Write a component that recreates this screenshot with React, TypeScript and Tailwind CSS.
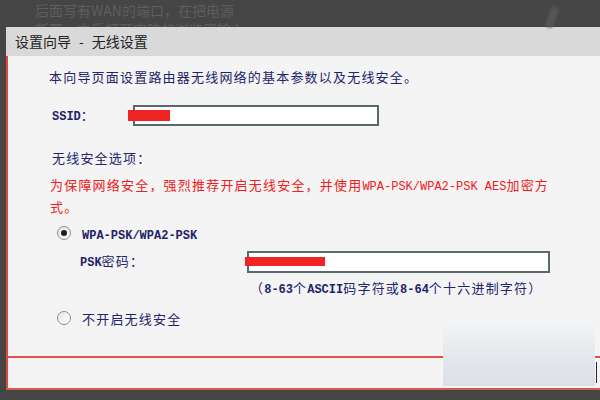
const cjk = "font-['Noto_Sans_CJK_SC','Noto_Sans',sans-serif]";
const mono = "font-['Liberation_Mono','Noto_Sans_CJK_SC',monospace]";

function Zh({ children }: { children: React.ReactNode }) {
  return <span className={`${cjk} tracking-[1.2px]`}>{children}</span>;
}

function En({ children }: { children: React.ReactNode }) {
  return <span className={`${mono} text-[12px] font-bold tracking-normal`}>{children}</span>;
}

function Radio({ checked }: { checked?: boolean }) {
  return (
    <span className="flex h-[14px] w-[14px] items-center justify-center rounded-full border border-[#8d8d8d] bg-gradient-to-br from-[#e6e6e6] to-white">
      {checked && <span className="h-[6px] w-[6px] rounded-full bg-[#1f1f1f]" />}
    </span>
  );
}

export default function App() {
  return (
    <div className="relative h-[400px] w-[600px] overflow-hidden bg-[#454545]">
      {/* 背景里的文章文字 */}
      <div className={`h-[27px] overflow-hidden pl-[35px] pt-[1px] text-[14px] leading-[19px] text-[#5e5e5e] ${cjk}`}>
        <p>后面写有WAN的端口，在把电源</p>
        <p>断开，之后打开电脑的浏览器输入</p>
      </div>
      <div className="absolute left-[548px] top-[6px] h-[22px] w-[8px] rotate-[20deg] rounded-full bg-[#555555] blur-[1px]" />

      {/* 对话框 */}
      <div className="ml-[6px] w-[600px]">
        <div className={`flex h-[29px] items-center bg-[#d9d9d9] pl-[9px] text-[14px] text-[#222] ${cjk}`}>
          <span>设置向导</span>
          <span className="mx-[8px]">-</span>
          <span>无线设置</span>
        </div>

        <div className="flex h-[300px] flex-col border-l-2 border-[#e0473c] bg-[#f4f4f4] pl-[41px] text-[13px] text-[#23236b]">
          <p className="mt-[11px] h-[20px] leading-[20px]">
            <Zh>本向导页面设置路由器无线网络的基本参数以及无线安全。</Zh>
          </p>

          <div className="mt-[18px] flex h-[21px] items-center">
            <span className="w-[84px] pl-[3px] leading-[20px]">
              <En>SSID</En>
              <Zh>：</Zh>
            </span>
            <div className="relative h-[21px] w-[246px] border-2 border-[#566a6a] bg-white">
              <span className="absolute -left-[7px] top-[3px] h-[11px] w-[42px] bg-[#f02424]" />
            </div>
          </div>

          <p className="mt-[22px] h-[20px] pl-[3px] leading-[20px]">
            <Zh>无线安全选项：</Zh>
          </p>

          <div className="mt-[6px] pl-[1px] text-[#ee2020]">
            <p className="h-[22px] whitespace-nowrap leading-[22px]">
              <Zh>为保障网络安全，强烈推荐开启无线安全，并使用</Zh>
              <span className={`${mono} text-[12px]`}>WPA-PSK/WPA2-PSK AES</span>
              <Zh>加密方</Zh>
            </p>
            <p className="h-[22px] leading-[22px]">
              <Zh>式。</Zh>
            </p>
          </div>

          <div className="mt-[4px] flex h-[22px] items-center pl-[8px]">
            <Radio checked />
            <span className="ml-[11px] pt-[3px] leading-[18px]">
              <En>WPA-PSK/WPA2-PSK</En>
            </span>
          </div>

          <div className="mt-[7px] flex h-[22px] items-center pl-[31px]">
            <span className="w-[167px] leading-[20px]">
              <En>PSK</En>
              <Zh>密码：</Zh>
            </span>
            <div className="relative h-[22px] w-[303px] border-2 border-[#566a6a] bg-white">
              <span className="absolute -left-[4px] top-[4px] h-[9px] w-[80px] bg-[#f02424]" />
            </div>
          </div>

          <p className="mt-[5px] h-[20px] pl-[201px] leading-[20px]">
            <Zh>（</Zh>
            <En>8-63</En>
            <Zh>个</Zh>
            <En>ASCII</En>
            <Zh>码字符或</Zh>
            <En>8-64</En>
            <Zh>个十六进制字符）</Zh>
          </p>

          <div className="mt-[9px] flex h-[22px] items-center pl-[8px]">
            <Radio />
            <span className="ml-[11px] pt-[2px] leading-[20px]">
              <Zh>不开启无线安全</Zh>
            </span>
          </div>
        </div>

        <div className="h-[2px] bg-[#dc5248]" />
        <div className="h-[30px] border-l-2 border-[#e0473c] bg-[#f4f4f4]" />
        <div className="h-[2px] bg-[#d9594f]" />
      </div>

      {/* 水印 */}
      <div className="absolute left-[443px] top-[322px] h-[64px] w-[152px] bg-gradient-to-b from-[#f3f4f5] via-[#e5e8ec] to-[#dbe0e7]" />
      <div className="absolute left-[596px] top-[362px] h-[21px] w-[1px] bg-[#2a2a2a]" />
    </div>
  );
}
